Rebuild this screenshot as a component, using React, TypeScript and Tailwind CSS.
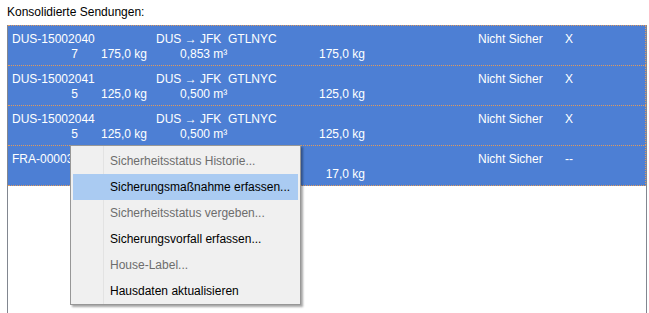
const ROWS = [
  { id: 'DUS-15002040', route: 'DUS → JFK', dest: 'GTLNYC', count: '7', weight: '175,0 kg', volume: '0,853 m³', total: '175,0 kg', status: 'Nicht Sicher', flag: 'X' },
  { id: 'DUS-15002041', route: 'DUS → JFK', dest: 'GTLNYC', count: '5', weight: '125,0 kg', volume: '0,500 m³', total: '125,0 kg', status: 'Nicht Sicher', flag: 'X' },
  { id: 'DUS-15002044', route: 'DUS → JFK', dest: 'GTLNYC', count: '5', weight: '125,0 kg', volume: '0,500 m³', total: '125,0 kg', status: 'Nicht Sicher', flag: 'X' },
  { id: 'FRA-00003341', route: '', dest: '', count: '', weight: '', volume: '', total: '17,0 kg', status: 'Nicht Sicher', flag: '--' },
]

const MENU = [
  { label: 'Sicherheitsstatus Historie...', disabled: true },
  { label: 'Sicherungsmaßnahme erfassen...', active: true },
  { label: 'Sicherheitsstatus vergeben...', disabled: true },
  { label: 'Sicherungsvorfall erfassen...' },
  { label: 'House-Label...', disabled: true },
  { label: 'Hausdaten aktualisieren' },
]

export default function App() {
  return (
    <div className="relative w-[649px] h-[313px] overflow-hidden bg-white text-[12px] text-black font-['Segoe_UI','Liberation_Sans',sans-serif]">
      <div className="h-[25px] pl-[7px] pt-[4px] leading-[16px]">Konsolidierte Sendungen:</div>

      <div className="ml-[7px] w-[640px] h-[288px] border-x border-[#828790]">
        {ROWS.map((r, i) => (
          <div
            key={r.id}
            className={`h-[40px] bg-[#4d7fd4] text-white border-t border-r border-dotted border-[#e09a5c] pl-[4px] pt-[5px] whitespace-nowrap ${
              i === ROWS.length - 1 ? 'h-[41px] border-b' : ''
            }`}
          >
            <div className="flex h-[15px] leading-[16px]">
              <span className="w-[144px]">{r.id}</span>
              <span className="w-[72px]">{r.route}</span>
              <span className="w-[250px]">{r.dest}</span>
              <span className="w-[78px]">{r.status}</span>
              <span className="w-[26px] text-center">{r.flag}</span>
            </div>
            <div className="flex h-[16px] leading-[16px]">
              <span className="w-[66px] text-right">{r.count}</span>
              <span className="w-[69px] text-right">{r.weight}</span>
              <span className="w-[102px] pl-[33px]">{r.volume}</span>
              <span className="w-[116px] text-right">{r.total}</span>
            </div>
          </div>
        ))}
      </div>

      <div className="absolute left-[70px] top-[145px] w-[231px] border border-[#979797] bg-[#f0f0f0] px-[2px] pt-[2px] pb-[0px] shadow-[2px_2px_2px_rgba(0,0,0,0.35)]">
        <div className="absolute left-[32px] top-0 bottom-0 w-px bg-[#e3e3e3]" />
        {MENU.map((m) => (
          <div
            key={m.label}
            className={`relative h-[26px] pl-[37px] leading-[26px] whitespace-nowrap ${
              m.active ? 'bg-[#aacbf2]' : ''
            } ${m.disabled ? 'text-[#6d6d6d]' : 'text-black'}`}
          >
            {m.label}
          </div>
        ))}
      </div>
    </div>
  )
}
